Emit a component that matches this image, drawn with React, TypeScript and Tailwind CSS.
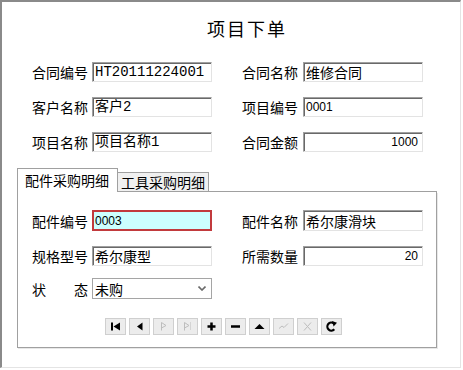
import React from "react";

const mono = "font-['Liberation_Mono','Noto_Sans_CJK_SC',monospace] text-[14px]";
const sans = "font-['Liberation_Sans','Noto_Sans_CJK_SC',sans-serif] text-[12px]";
const cjk = "font-['Noto_Sans_CJK_SC',sans-serif] text-[14px]";

function Label({ children, className = "" }: { children: React.ReactNode; className?: string }) {
  return <div className={`w-[56px] shrink-0 text-[14px] leading-[20px] whitespace-nowrap ${className}`}>{children}</div>;
}

function Box({
  children,
  right,
  font = cjk,
  className = "",
}: {
  children: React.ReactNode;
  right?: boolean;
  font?: string;
  className?: string;
}) {
  return (
    <div
      className={`flex h-[20px] w-[120px] shrink-0 items-center border-t border-l border-r border-b border-t-[#a0a0a0] border-l-[#a0a0a0] border-r-[#e3e3e3] border-b-[#e3e3e3] bg-white shadow-[inset_1px_1px_0_#696969] leading-[18px] whitespace-nowrap ${
        right ? "justify-end pr-[4px]" : "pl-[2px]"
      } ${font} ${className}`}
    >
      {children}
    </div>
  );
}

function Btn({ children }: { children: React.ReactNode }) {
  return (
    <div className="h-[17px] w-[21px] border border-[#cfcfcf] bg-[#ececec]">
      <svg width="19" height="15" viewBox="1 1 19 15">
        {children}
      </svg>
    </div>
  );
}

const off = "#bdbdbd";

export default function App() {
  return (
    <div className="h-[370px] w-[463px] bg-white font-['Noto_Sans_CJK_SC',sans-serif] text-black">
      <div className="h-[368px] w-[461px] border-t-2 border-l-2 border-r border-b border-t-[#8a8a8a] border-l-[#8a8a8a] border-r-[#e4e4e4] border-b-[#e4e4e4]">
        <div className="h-[60px] pt-[13px] pl-[205px] text-[18px] leading-[26px] tracking-[2px]">项目下单</div>

        <div className="flex flex-col gap-[15px] pl-[30px]">
          <div className="flex h-[20px] items-center">
            <Label>合同编号</Label>
            <Box font={mono} className="ml-[4px]">HT20111224001</Box>
            <Label className="ml-[30px]">合同名称</Label>
            <Box className="ml-[5px]">维修合同</Box>
          </div>
          <div className="flex h-[20px] items-center">
            <Label>客户名称</Label>
            <Box font={mono} className="ml-[4px]">客户2</Box>
            <Label className="ml-[30px]">项目编号</Label>
            <Box font={sans} className="ml-[5px]">0001</Box>
          </div>
          <div className="flex h-[20px] items-center">
            <Label>项目名称</Label>
            <Box font={mono} className="ml-[4px]">项目名称1</Box>
            <Label className="ml-[30px]">合同金额</Label>
            <Box font={sans} right className="ml-[5px]">1000</Box>
          </div>
        </div>

        <div className="mt-[16px] ml-[15px] w-[420px]">
          <div className="flex h-[24px] items-end text-[14px]">
            <div className="flex h-[24px] w-[101px] items-center border-t border-l border-r border-[#a0a0a0] bg-white pb-[1px] pl-[7px] leading-[20px]">
              配件采购明细
            </div>
            <div className="flex h-[20px] w-[91px] items-center border-t border-r border-b border-[#a0a0a0] bg-[#f0f0f0] pl-[3px] leading-[18px]">
              工具采购明细
            </div>
            <div className="h-px flex-1 bg-[#a0a0a0]" />
          </div>

          <div className="h-[156px] border-l border-r border-b border-[#a0a0a0] pt-[18px] pl-[14px] shadow-[1px_1px_0_#e8e8e8]">
            <div className="flex h-[21px] items-center">
              <Label>配件编号</Label>
              <div className={`ml-[4px] flex h-[21px] w-[120px] items-center border-2 border-[#c23a3d] bg-[#ccffff] pl-[1px] ${sans}`}>
                0003
              </div>
              <Label className="ml-[30px]">配件名称</Label>
              <Box className="ml-[5px] h-[21px]">希尔康滑块</Box>
            </div>

            <div className="mt-[15px] flex h-[20px] items-center">
              <Label>规格型号</Label>
              <Box className="ml-[4px]">希尔康型</Box>
              <Label className="ml-[30px]">所需数量</Label>
              <Box font={sans} right className="ml-[5px]">20</Box>
            </div>

            <div className="mt-[12px] flex h-[21px] items-center">
              <Label className="flex justify-between">
                <span>状</span>
                <span>态</span>
              </Label>
              <div className="ml-[4px] flex h-[21px] w-[120px] items-center justify-between border border-[#a5a5a5] bg-white pl-[2px] pr-[5px] text-[14px] leading-[18px]">
                <span>未购</span>
                <svg width="8" height="5" viewBox="0 0 8 5">
                  <polyline points="0.5,0.5 4,4 7.5,0.5" fill="none" stroke="#6a6a6a" strokeWidth="1.6" />
                </svg>
              </div>
            </div>

            <div className="mt-[19px] ml-[73px] flex gap-[3px]">
              <Btn>
                <rect x="6" y="4.5" width="2" height="8" />
                <path d="M15 4.5 L15 12.5 L8.5 8.5 Z" />
              </Btn>
              <Btn>
                <path d="M13.5 4.5 L13.5 12.5 L8 8.5 Z" />
              </Btn>
              <Btn>
                <path d="M8.5 4.5 V12.5 M8.5 4.5 L13 7.5 L8.5 10" fill="none" stroke={off} strokeWidth="1" />
              </Btn>
              <Btn>
                <path d="M7.5 4.5 V12.5 M7.5 4.5 L12 7.5 L7.5 10" fill="none" stroke={off} strokeWidth="1" />
                <path d="M13.5 4.5 V12.5" fill="none" stroke={off} strokeWidth="1" strokeDasharray="1 1" />
              </Btn>
              <Btn>
                <rect x="6.5" y="7.25" width="8" height="2.5" />
                <rect x="9.25" y="4.5" width="2.5" height="8" />
              </Btn>
              <Btn>
                <rect x="6" y="7.25" width="9" height="2.5" />
              </Btn>
              <Btn>
                <path d="M5.5 11 L15.5 11 L10.5 6 Z" />
              </Btn>
              <Btn>
                <polyline points="6,10.5 9,8 11,9.5 15,5.5" fill="none" stroke={off} strokeWidth="1" />
              </Btn>
              <Btn>
                <path d="M7 4.5 L14 12.5 M14 4.5 L7 12.5" fill="none" stroke={off} strokeWidth="1" />
              </Btn>
              <Btn>
                <path d="M13.3 11.3 A4 4 0 1 1 12.8 5.4" fill="none" stroke="#000" strokeWidth="2.2" />
                <path d="M11 3 L16 4.8 L12.6 8.6 Z" />
              </Btn>
            </div>
          </div>
        </div>
      </div>
    </div>
  );
}
